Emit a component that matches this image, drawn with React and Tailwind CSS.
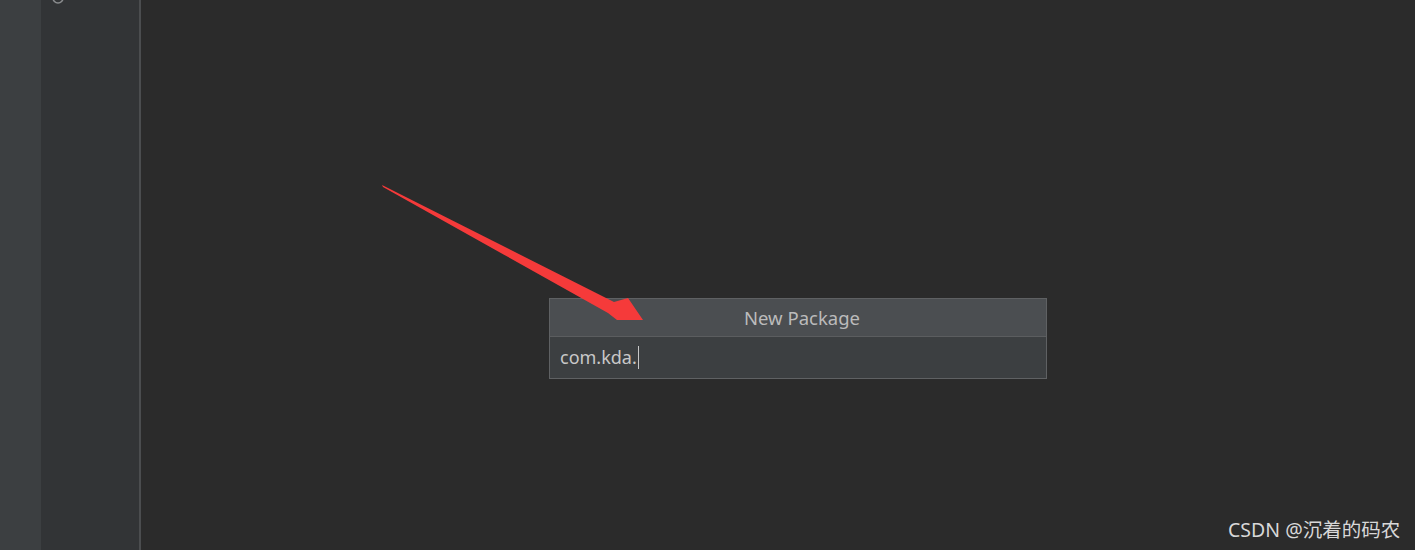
export default function App() {
  return (
    <div className="relative flex h-[550px] w-[1415px] overflow-hidden bg-[#2b2b2b]" style={{ fontFamily: '"Noto Sans", "Open Sans", sans-serif' }}>
      <div className="h-full w-[41px] bg-[#3c3f41]" />
      <div className="relative h-full w-[98px] bg-[#323436]">
        <svg className="absolute left-[10px] top-0" width="14" height="6" viewBox="0 0 14 6">
          <circle cx="7" cy="-2" r="5" fill="none" stroke="#8a8c8e" strokeWidth="1.6" />
        </svg>
      </div>
      <div className="h-full w-[2px] bg-[#4b4d4f]" />
      <div className="h-full flex-1 bg-[#2b2b2b]" />

      <div className="absolute left-[549px] top-[298px] w-[498px] border border-[#5f6163]">
        <div className="flex h-[38px] items-center justify-center border-b border-[#5b5d5f] bg-[#4b4e51] pl-[8px] text-[18.5px] text-[#bbbbbb]">
          New Package
        </div>
        <div className="flex h-[41px] items-center bg-[#3c3f41] pl-[10px] text-[18px] text-[#c8c8c8]">
          <span>com.kda.</span>
          <span className="ml-[1px] h-[23px] w-[1px] bg-[#c8c8c8]" />
        </div>
      </div>

      <svg className="absolute left-0 top-0" width="1415" height="550" viewBox="0 0 1415 550">
        <polygon
          points="382,185 614,302 628,298 643,320 617,320 608,313 383,187"
          fill="#f53a3a"
        />
      </svg>

      <div className="absolute left-[1228px] top-[515px] text-[19.5px] text-[#d8d8d8]" style={{ fontFamily: '"Noto Sans", "Noto Sans CJK SC", sans-serif' }}>
        CSDN @沉着的码农
      </div>
    </div>
  );
}
